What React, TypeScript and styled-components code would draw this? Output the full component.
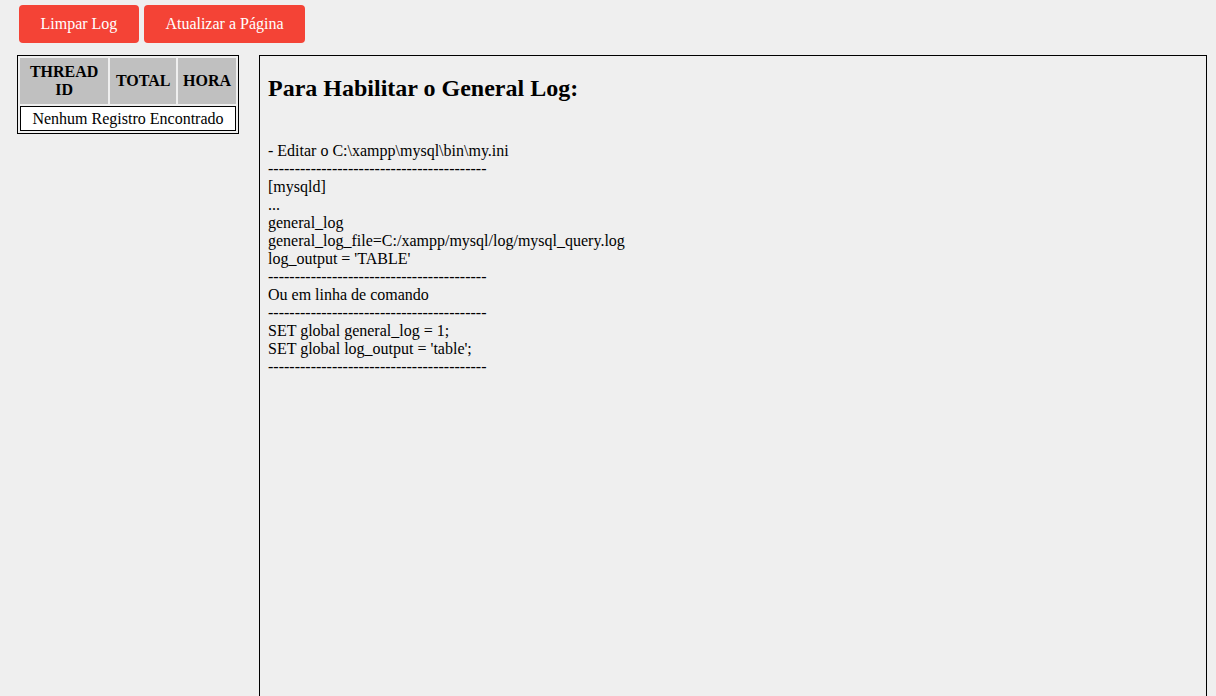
import React from "react";
import styled, { createGlobalStyle } from "styled-components";

const Global = createGlobalStyle`
  html, body {
    margin: 0;
    padding: 0;
    overflow: hidden;
    background: #efefef;
    font-family: "Liberation Serif", "Times New Roman", serif;
    font-size: 16px;
    color: #000;
  }
`;

const Page = styled.div`
  display: flex;
  flex-direction: column;
  height: 696px;
`;

const Toolbar = styled.div`
  display: flex;
  gap: 5px;
  padding: 5px 0 0 19px;
`;

const Button = styled.button`
  height: 38px;
  padding: 0 21.5px;
  border: none;
  border-radius: 4px;
  background: #f44336;
  color: #fff;
  font-family: "Liberation Serif", "Times New Roman", serif;
  font-size: 16px;
  cursor: pointer;
`;

const Main = styled.div`
  display: flex;
  align-items: flex-start;
  gap: 20px;
  margin-top: 12px;
  padding: 0 9px 0 17px;
`;

const LogTable = styled.table`
  width: 222px;
  border: 1px solid #000;
  border-spacing: 2px;
  flex-shrink: 0;
`;

const HeadCell = styled.th<{ $w: number }>`
  width: ${(p) => p.$w}px;
  background: #c0c0c0;
  font-weight: bold;
  padding: 5px 1px;
  line-height: 18px;
  text-align: center;
`;

const EmptyCell = styled.td`
  border: 1px solid #000;
  background: #fff;
  text-align: center;
  padding: 2px 1px;
  line-height: 19px;
`;

const Panel = styled.div`
  flex: 1;
  height: 700px;
  border: 1px solid #000;
  padding: 0 8px;
`;

const Title = styled.h2`
  font-size: 24px;
  font-weight: bold;
  margin: 19px 0 20px;
`;

const Lines = styled.div`
  line-height: 18px;
  padding-top: 20px;
`;

const lines = [
  "- Editar o C:\\xampp\\mysql\\bin\\my.ini",
  "-----------------------------------------",
  "[mysqld]",
  "...",
  "general_log",
  "general_log_file=C:/xampp/mysql/log/mysql_query.log",
  "log_output = 'TABLE'",
  "-----------------------------------------",
  "Ou em linha de comando",
  "-----------------------------------------",
  "SET global general_log = 1;",
  "SET global log_output = 'table';",
  "-----------------------------------------",
];

export default function App() {
  return (
    <>
      <Global />
      <Page>
        <Toolbar>
          <Button>Limpar Log</Button>
          <Button>Atualizar a Página</Button>
        </Toolbar>
        <Main>
          <LogTable>
            <thead>
              <tr>
                <HeadCell $w={85}>THREAD ID</HeadCell>
                <HeadCell $w={63}>TOTAL</HeadCell>
                <HeadCell $w={55}>HORA</HeadCell>
              </tr>
            </thead>
            <tbody>
              <tr>
                <EmptyCell colSpan={3}>Nenhum Registro Encontrado</EmptyCell>
              </tr>
            </tbody>
          </LogTable>
          <Panel>
            <Title>Para Habilitar o General Log:</Title>
            <Lines>
              {lines.map((l, i) => (
                <div key={i}>{l}</div>
              ))}
            </Lines>
          </Panel>
        </Main>
      </Page>
    </>
  );
}
